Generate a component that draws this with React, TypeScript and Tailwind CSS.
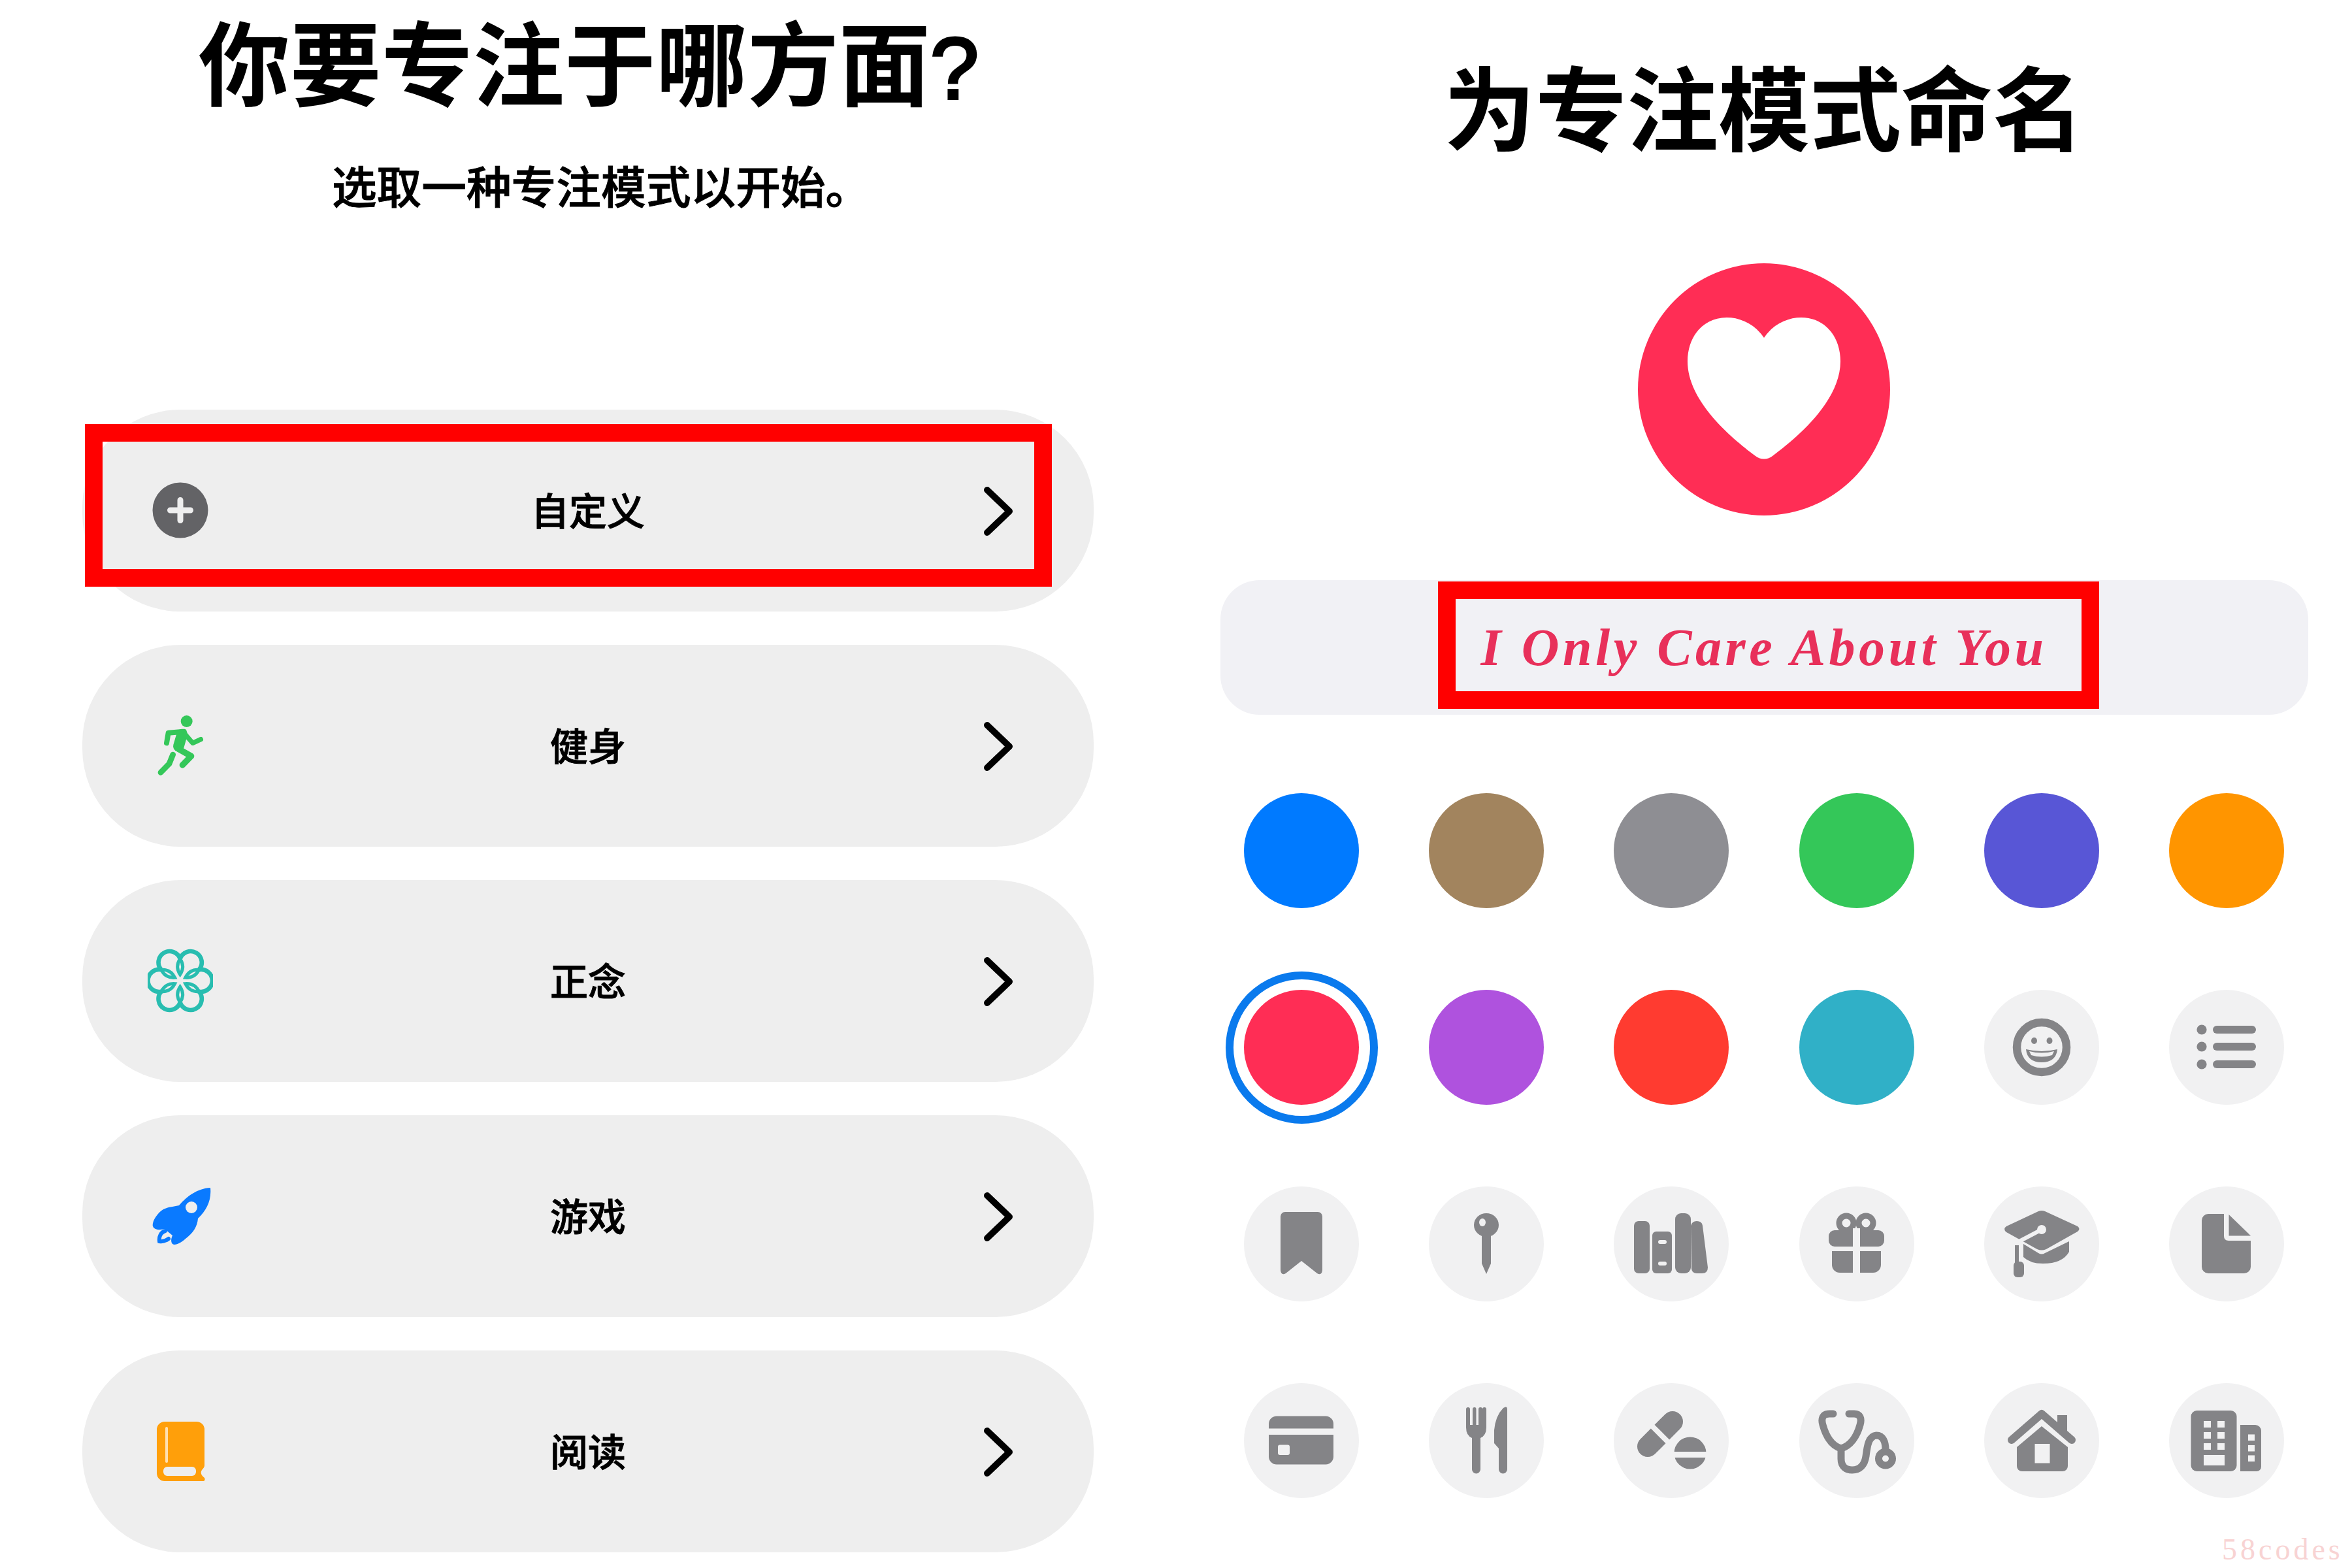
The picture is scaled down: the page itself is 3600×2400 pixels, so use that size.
import React from 'react';

const GRAY = '#848487';
const BG = '#f1f1f2';

const Chevron = () => (
    <svg viewBox="0 0 44 75" className="w-[44px] h-[75px]">
        <path d="M5 5 L39 37.5 L5 70" fill="none" stroke="#000" strokeWidth="10" strokeLinecap="round" strokeLinejoin="round" />
    </svg>
);

const PlusIcon = () => (
    <svg viewBox="0 0 100 100" className="w-[100px] h-[100px]">
        <circle cx="50" cy="50" r="42.5" fill="#636366" />
        <path d="M50 34.5 V65.5 M34.5 50 H65.5" stroke="#eeeeee" strokeWidth="9" strokeLinecap="round" />
    </svg>
);

const RunnerIcon = () => (
    <svg viewBox="18 66 300 300" className="w-[100px] h-[100px]" fill="none" stroke="#34c759" strokeLinecap="round" strokeLinejoin="round">
        <circle cx="197" cy="105" r="27" fill="#34c759" stroke="none" />
        <path d="M105 205 L113 158 L185 152" strokeWidth="24" />
        <path d="M176 165 L160 220" strokeWidth="50" />
        <path d="M190 165 L225 205 L262 188" strokeWidth="22" />
        <path d="M160 232 L218 265 L178 306" strokeWidth="28" />
        <path d="M134 258 L117 300 L78 340" strokeWidth="26" />
    </svg>
);

const polar = (d: number, deg: number) => {
    const r = (deg * Math.PI) / 180;
    return `${197 + d * Math.cos(r)} ${216 + d * Math.sin(r)}`;
};

const FlowerIcon = () => (
    <svg viewBox="48 66 300 300" className="w-[100px] h-[100px]" fill="none" stroke="#28bdb0" strokeWidth="20">
        {[0, 60, 120, 180, 240, 300].map((a) => (
            <path key={a} d={`M${polar(100, a - 30)} A51 51 0 1 1 ${polar(100, a + 30)}`} />
        ))}
        {[0, 60, 120, 180, 240, 300].map((a) => (
            <path key={a} transform={`rotate(${a} 197 216)`} d="M197 188 Q221 152 197 116 Q173 152 197 188 Z" strokeWidth="15" />
        ))}
    </svg>
);

const RocketIcon = () => (
    <svg viewBox="0 0 100 100" className="w-[100px] h-[100px]">
        <g transform="translate(2 0)">
            <path d="M94 7 C96 26 88 42 75 54 C74 66 68 76 56 85 C48 92 40 96 36 93 C33 90 34 84 36 80 L24 70 C18 72 8 72 6 66 C4 60 12 46 22 40 C30 36 38 36 46 34 C58 20 74 8 94 7 Z" fill="#0a7aff" />
            <ellipse cx="65" cy="37" rx="9" ry="9" fill="#eeeeee" />
            <path d="M25 73 C18 75 15 82 16 89 C21 90 26 88 30 85" fill="none" stroke="#0a7aff" strokeWidth="6" strokeLinecap="round" />
        </g>
    </svg>
);

const BookIcon = () => (
    <svg viewBox="0 0 100 100" className="w-[100px] h-[100px]">
        <g transform="translate(1 0)">
            <path d="M25 5 H74 a12 12 0 0 1 12 12 V72 Q86 75 82 79 Q78 85 86 91 Q88 96 83 96 H25 a12 12 0 0 1 -12 -12 V17 a12 12 0 0 1 12 -12 Z" fill="#ff9f0a" />
            <rect x="23" y="74" width="50" height="14" rx="6" fill="#eeeeee" />
            <rect x="26" y="13" width="4" height="55" rx="2" fill="#ffe0b0" />
        </g>
    </svg>
);

const rows = [
    { label: '自定义', icon: <PlusIcon /> },
    { label: '健身', icon: <RunnerIcon /> },
    { label: '正念', icon: <FlowerIcon /> },
    { label: '游戏', icon: <RocketIcon /> },
    { label: '阅读', icon: <BookIcon /> },
];

const swatches = ['#007aff', '#a2845e', '#8e8e93', '#34c759', '#5856d6', '#ff9500', '#ff2d55', '#af52de', '#ff3b30', '#30b0c7'];

const glyphs: React.ReactNode[] = [
    // smile
    <g key="smile">
        <circle cx="88" cy="88" r="38" fill="none" stroke={GRAY} strokeWidth="12.5" />
        <ellipse cx="76.5" cy="78" rx="4.5" ry="5" fill={GRAY} />
        <ellipse cx="100" cy="78" rx="4.5" ry="5" fill={GRAY} />
        <path d="M64 91 Q88 97 112 91 Q110 111 88 111 Q66 111 64 91 Z" fill={GRAY} />
        <path d="M69 94 Q88 99 107 94 L104 100 Q88 105 72 100 Z" fill={BG} />
    </g>,
    // list
    <g key="list" fill={GRAY}>
        <circle cx="50" cy="61" r="7.6" />
        <circle cx="50" cy="87" r="7.6" />
        <circle cx="50" cy="114" r="7.6" />
        <rect x="67" y="55" width="66" height="12" rx="6" />
        <rect x="67" y="81" width="66" height="12" rx="6" />
        <rect x="67" y="108" width="66" height="12" rx="6" />
    </g>,
    // bookmark
    <path key="bookmark" d="M63 39 H113 a7 7 0 0 1 7 7 V128 Q119 137 112 133 L88 114 L64 133 Q57 137 56 128 V46 a7 7 0 0 1 7 -7 Z" fill={GRAY} />,
    // pin
    <g key="pin">
        <ellipse cx="88" cy="59" rx="19" ry="18" fill={GRAY} />
        <ellipse cx="82" cy="55" rx="5" ry="6" fill={BG} />
        <path d="M81 74 H95 V118 L88 134 L81 118 Z" fill={GRAY} />
    </g>,
    // books
    <g key="books" fill={GRAY}>
        <rect x="31" y="53" width="24" height="80" rx="7" />
        <rect x="59" y="69" width="30" height="64" rx="6" />
        <rect x="68" y="82" width="13" height="6" rx="3" fill={BG} />
        <rect x="68" y="115" width="13" height="6" rx="3" fill={BG} />
        <rect x="94" y="41" width="24" height="92" rx="9" />
        <path d="M118 60 Q120 53 127 53 Q135 53 136 60 L144 124 Q144 133 135 133 L127 133 Q120 133 119 126 Z" />
    </g>,
    // gift
    <g key="gift">
        <circle cx="72" cy="56" r="11" fill="none" stroke={GRAY} strokeWidth="9" />
        <circle cx="102" cy="56" r="11" fill="none" stroke={GRAY} strokeWidth="9" />
        <rect x="45" y="67" width="85" height="25" rx="9" fill={GRAY} />
        <path d="M50 99 H125 V120 a12 12 0 0 1 -12 12 H62 a12 12 0 0 1 -12 -12 Z" fill={GRAY} />
        <rect x="82" y="64" width="11" height="70" fill={BG} />
    </g>,
    // graduation cap
    <g key="cap">
        <path d="M83 38 Q88 36 93 38 L143 61 Q148 65 143 69 L95 96 Q88 99 81 96 L34 70 Q28 65 34 61 Z" fill={GRAY} />
        <path d="M60 88 L83 102 Q88 105 93 102 L130 84 V100 Q120 118 90 118 Q70 118 60 108 Z" fill={GRAY} />
        <path d="M88 66 L48 87" stroke={BG} strokeWidth="6" />
        <circle cx="88" cy="66" r="7" fill={BG} />
        <rect x="47" y="90" width="6" height="28" fill={GRAY} />
        <rect x="45" y="115" width="16" height="24" rx="6" fill={GRAY} />
    </g>,
    // document
    <g key="doc" fill={GRAY}>
        <path d="M60 42 H84 V76 Q84 83 91 83 H125 V123 a10 10 0 0 1 -10 10 H60 a10 10 0 0 1 -10 -10 V52 a10 10 0 0 1 10 -10 Z" />
        <path d="M91.5 43 L125 75.5 H91.5 Z" />
    </g>,
    // card
    <g key="card">
        <rect x="38" y="50.5" width="99" height="74" rx="12" fill={GRAY} />
        <rect x="38" y="69.5" width="99" height="9.5" fill={BG} />
        <rect x="52" y="94.5" width="18" height="15.5" rx="3" fill={BG} />
    </g>,
    // fork and knife
    <g key="fork" fill={GRAY}>
        <path d="M57 40 Q57 37 60 37 Q63 37 63 40 V64 H67 V40 Q67 37 70 37 Q72.5 37 72.5 40 V64 H76 V40 Q76 37 79 37 Q82 37 82 40 V64 H82 V40 Q82 37 85 37 Q88 37 88 40 V68 Q88 80 79 84 V132 a6.5 6.5 0 0 1 -13 0 V84 Q57 80 57 68 Z" />
        <path d="M120 40 V132 a6.5 6.5 0 0 1 -13 0 V100 L100 92 V72 Q102 50 114 38 Q120 34 120 40 Z" />
    </g>,
    // pills
    <g key="pills">
        <path d="M90 59 L52 97" stroke={GRAY} strokeWidth="32" strokeLinecap="round" />
        <path d="M46 53 L96 103" stroke={BG} strokeWidth="8" />
        <circle cx="117" cy="107" r="24.5" fill={GRAY} />
        <rect x="90" y="105" width="54" height="9" fill={BG} />
    </g>,
    // stethoscope
    <g key="steth" fill="none" stroke={GRAY} strokeWidth="11" strokeLinecap="round" strokeLinejoin="round">
        <path d="M52 47 H46 C36 47 33 54 36 64 C41 82 50 96 64 100 C78 96 88 82 93 64 C96 54 93 47 84 47 H76" />
        <path d="M64 100 V116 C64 128 72 133 81 133 C92 133 100 126 102 112 C104 96 106 81 118 80 C128 80 132 90 132 102" />
        <circle cx="132" cy="115.5" r="10.5" />
    </g>,
    // house
    <g key="house" fill={GRAY}>
        <rect x="112" y="49" width="15" height="25" />
        <path d="M42 87 L88 47 L134 87" fill="none" stroke={GRAY} strokeWidth="12" strokeLinecap="round" strokeLinejoin="round" />
        <path d="M88 66 L128 98 V127 a8 8 0 0 1 -8 8 H58 a8 8 0 0 1 -8 -8 V98 Z" />
        <rect x="77.5" y="93" width="23" height="29.5" fill={BG} />
    </g>,
    // buildings
    <g key="buildings">
        <rect x="33.5" y="42" width="70" height="93" rx="9" fill={GRAY} />
        <path d="M109 64 H132 a9 9 0 0 1 9 9 V128 a7 7 0 0 1 -7 7 H109 Z" fill={GRAY} />
        <g fill={BG}>
            {[58, 75, 92].map((y) => (
                <React.Fragment key={y}>
                    <rect x="53" y={y} width="11" height="10" />
                    <rect x="74" y={y} width="11" height="10" />
                </React.Fragment>
            ))}
            <rect x="53" y="110" width="32" height="16" />
            <rect x="121" y="78.5" width="10" height="9.5" />
            <rect x="121" y="95" width="10" height="9.5" />
            <rect x="121" y="110.5" width="10" height="9.5" />
        </g>
    </g>,
];

const cjk = "font-['Noto_Sans_CJK_SC','Liberation_Sans',sans-serif]";

export default function App() {
    return (
        <div className={`w-[3600px] h-[2400px] bg-white relative flex text-black ${cjk}`}>
            {/* Left: choose a focus */}
            <div className="w-[1800px] flex flex-col items-center px-[126px] pt-[14px]">
                <h1 className="ml-[2px] font-['Liberation_Sans','Noto_Sans_CJK_SC',sans-serif] text-[140px] leading-[178px] font-bold whitespace-nowrap">
                    你要专注于哪方面<span className="text-[134px] font-normal [-webkit-text-stroke:4px_black]">?</span>
                </h1>
                <p className="mt-[37.5px] ml-[40px] text-[68.7px] leading-[100px] font-medium [-webkit-text-stroke:1px_black] whitespace-nowrap">选取一种专注模式以开始。</p>
                <div className="mt-[295px] w-full flex flex-col gap-[51px] relative">
                    {rows.map((row) => (
                        <div key={row.label} className="h-[309px] rounded-[150px] bg-[#eeeeee] grid grid-cols-[1fr_auto_1fr] items-center">
                            <div className="pl-[100px]">{row.icon}</div>
                            <span className="text-[58px] font-medium [-webkit-text-stroke:1px_black] pb-[4px]">{row.label}</span>
                            <div className="flex justify-end pr-[124px] pt-[3px]">
                                <Chevron />
                            </div>
                        </div>
                    ))}
                    {/* annotation */}
                    <div className="absolute left-[4px] top-[22px] w-[1480px] h-[249px] border-[27px] border-[#ff0000]" />
                </div>
            </div>

            {/* Right: name the focus */}
            <div className="w-[1800px] flex flex-col items-center pt-[61px]">
                <h1 className="text-[140px] leading-[196px] font-bold whitespace-nowrap">为专注模式命名</h1>
                <div className="mt-[146px] w-[386px] h-[386px] rounded-full bg-[#ff2d55] shrink-0">
                    <svg viewBox="0 0 386 386" className="w-[386px] h-[386px]">
                        <path d="M193 114 C178 92 156 83 136 83 C100 83 76 112 76 150 C76 210 140 265 180 295 C188 301 198 301 206 295 C246 265 310 210 310 150 C310 112 286 83 250 83 C230 83 208 92 193 114 Z" fill="#fff" />
                    </svg>
                </div>
                <div className="mt-[99px] w-[1665px] h-[206px] rounded-[60px] bg-[#f1f1f5] relative flex items-center justify-center shrink-0">
                    <span className="font-['Liberation_Serif',serif] italic font-bold text-[80px] tracking-[5.5px] text-[#e8305a] whitespace-nowrap">
                        I Only Care About You
                    </span>
                    <div className="absolute left-[333px] top-[2px] w-[1012px] h-[195px] border-[27px] border-[#ff0000]" />
                </div>
                <div className="mt-[120px] grid grid-cols-[repeat(6,176px)] gap-x-[107.4px] gap-y-[125px]">
                    {swatches.map((c, i) => (
                        <div key={c} className="w-[176px] h-[176px] rounded-full relative" style={{ backgroundColor: c }}>
                            {i === 6 && <div className="absolute -left-[28px] -top-[28px] w-[233px] h-[233px] rounded-full border-[12px] border-[#0a7aed]" />}
                        </div>
                    ))}
                    {glyphs.map((g, i) => (
                        <div key={i} className="w-[176px] h-[176px] rounded-full bg-[#f1f1f2]">
                            <svg viewBox="0 0 176 176" className="w-[176px] h-[176px]">{g}</svg>
                        </div>
                    ))}
                </div>
            </div>

            {/* watermark */}
            <span className="absolute left-[3401px] top-[2342px] font-['Liberation_Serif',serif] text-[46px] leading-[60px] tracking-[5px] text-[#f8d3d3]">58codes</span>
        </div>
    );
}
